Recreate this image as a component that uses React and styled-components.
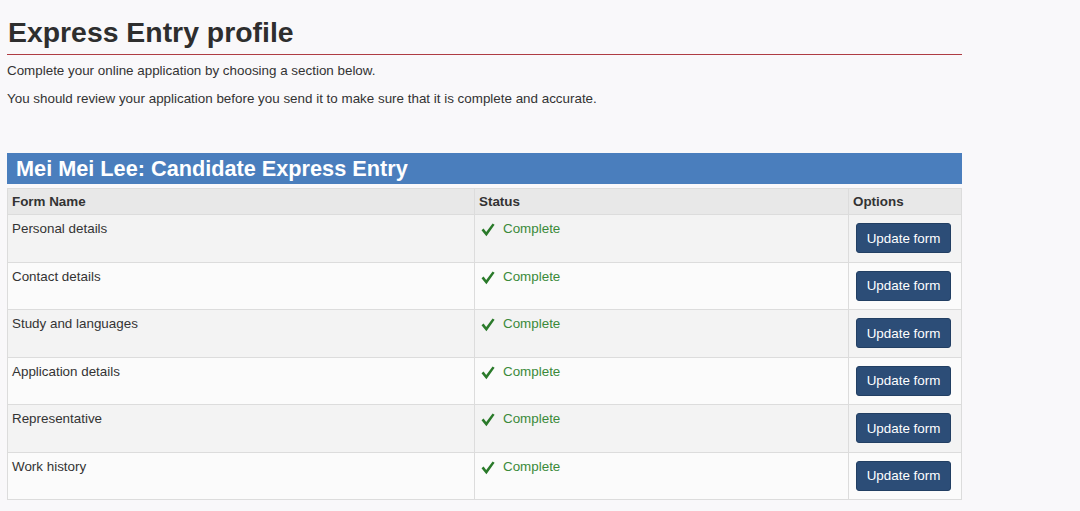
import React from "react";
import styled, { createGlobalStyle } from "styled-components";

const GlobalStyle = createGlobalStyle`
  html, body {
    margin: 0;
    padding: 0;
    background: #f9f8fa;
    font-family: "Liberation Sans", Arial, sans-serif;
    color: #333;
  }
`;

const Page = styled.main`
  width: 955px;
  padding: 14px 0 0 7px;
`;

const Title = styled.h1`
  margin: 0;
  padding: 0 0 4px 1px;
  font-size: 28.4px;
  line-height: 36px;
  font-weight: 700;
  color: #2e2e2e;
  border-bottom: 1px solid #af3c43;
`;

const Intro = styled.p`
  margin: ${(p) => p.$top}px 0 0;
  font-size: 13.4px;
  line-height: 18px;
  color: #333;
`;

const Section = styled.section`
  margin-top: 45.5px;
`;

const Banner = styled.h2`
  margin: 0 0 4px;
  padding: 0 0 0 9px;
  height: 31px;
  line-height: 31px;
  font-size: 21.7px;
  font-weight: 700;
  color: #fff;
  background: #4a7ebd;
`;

const Table = styled.table`
  width: 100%;
  border-collapse: collapse;
  font-size: 13.4px;
  line-height: 20px;
`;

const HeadCell = styled.th`
  box-sizing: border-box;
  text-align: left;
  font-weight: 700;
  padding: 3px 4px 2px;
  height: 26px;
  background: #e8e8e8;
  border: 1px solid #dcdcdc;
  color: #333;
  width: ${(p) => p.$w || "auto"};
`;

const Row = styled.tr`
  height: 47.5px;
  background: ${(p) => (p.$odd ? "#f3f3f3" : "#fbfbfb")};
`;

const Cell = styled.td`
  vertical-align: top;
  padding: 4px 4px;
  border: 1px solid #dcdcdc;
  color: #333;
`;

const Status = styled.span`
  display: inline-flex;
  align-items: flex-start;
  gap: 8px;
  color: #3a8a3a;
  padding-left: 2px;
`;

const Check = styled.svg`
  width: 14px;
  height: 14px;
  margin-top: 4px;
  flex: none;
`;

const Button = styled.button`
  margin: 4px 0 0 3px;
  width: 95px;
  height: 30px;
  padding: 0;
  border: 1px solid #223f63;
  border-radius: 3px;
  background: #2c4d77;
  color: #fff;
  font-family: "Liberation Sans", Arial, sans-serif;
  font-size: 13.4px;
  cursor: pointer;
`;

const forms = [
  "Personal details",
  "Contact details",
  "Study and languages",
  "Application details",
  "Representative",
  "Work history",
];

export default function App() {
  return (
    <>
      <GlobalStyle />
      <Page>
        <Title>Express Entry profile</Title>
        <Intro $top={6.5}>Complete your online application by choosing a section below.</Intro>
        <Intro $top={10}>
          You should review your application before you send it to make sure that it is complete and accurate.
        </Intro>
        <Section>
          <Banner>Mei Mei Lee: Candidate Express Entry</Banner>
          <Table>
            <thead>
              <tr>
                <HeadCell $w="467px">Form Name</HeadCell>
                <HeadCell $w="374px">Status</HeadCell>
                <HeadCell>Options</HeadCell>
              </tr>
            </thead>
            <tbody>
              {forms.map((f, i) => (
                <Row key={f} $odd={i % 2 === 0}>
                  <Cell>{f}</Cell>
                  <Cell>
                    <Status>
                      <Check viewBox="0 0 14 14">
                        <path
                          d="M0.5 7.2 L2.6 5.6 L5.2 9 L11.6 0.6 L13.6 1.8 L5.4 13.2 Z"
                          fill="#2a7a2a"
                        />
                      </Check>
                      Complete
                    </Status>
                  </Cell>
                  <Cell>
                    <Button type="button">Update form</Button>
                  </Cell>
                </Row>
              ))}
            </tbody>
          </Table>
        </Section>
      </Page>
    </>
  );
}
